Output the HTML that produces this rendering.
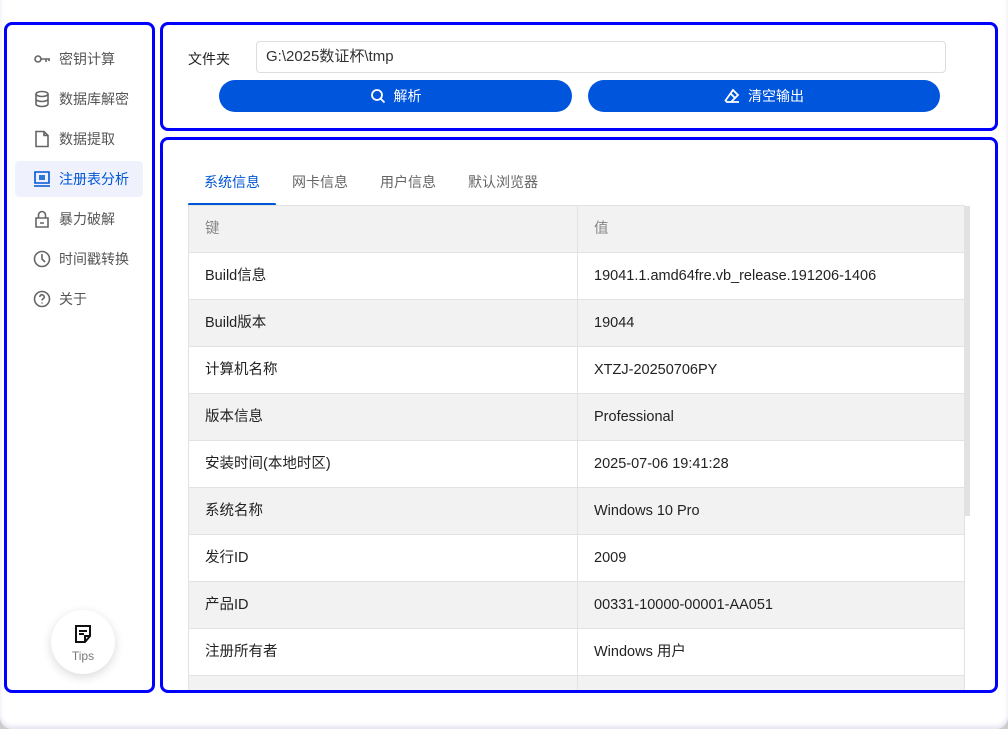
<!DOCTYPE html>
<html><head><meta charset="utf-8"><style>
*{box-sizing:border-box;margin:0;padding:0}
html,body{width:1008px;height:729px;overflow:hidden;background:#ccc}
body{font-family:"Liberation Sans","Noto Sans CJK SC",sans-serif;font-size:14px;color:#222}
.win{position:absolute;left:0;top:0;width:1008px;height:729px;background:#fff;border-radius:0 0 12px 12px;box-shadow:inset 0 -3px 4px #e4e4f2}
.panel{position:absolute;border:3px solid #0000ff;border-radius:8px;background:#fff}
.side{left:4px;top:22px;width:151px;height:671px}
.item{position:absolute;left:8px;width:128px;height:36px;display:flex;align-items:center;padding-left:18px;color:#555;font-size:14px}
.item svg{width:18px;height:18px;margin-right:8px;fill:none;stroke:#666;stroke-width:1.6}
.item.act{background:#eff2fd;color:#0055d4;border-radius:4px}
.item.act svg{stroke:#0055d4}
.tips{position:absolute;left:44px;top:585px;width:64px;height:64px;border-radius:50%;background:#fff;box-shadow:0 3px 10px rgba(0,0,0,.15);text-align:center;font-size:12px;color:#777}
.top{left:160px;top:22px;width:838px;height:109px}
.input{position:absolute;left:93px;top:16px;width:690px;height:32px;border:1px solid #ddd;border-radius:4px;padding-left:9px;line-height:30px;font-size:15px;color:#333}
.btn{position:absolute;top:55px;height:32px;border-radius:16px;background:#0055dd;color:#fff;display:flex;align-items:center;justify-content:center;font-size:14px}
.btn svg{width:16px;height:16px;margin-right:8px;fill:none;stroke:#fff;stroke-width:1.8}
.bot{left:160px;top:137px;width:838px;height:556px;overflow:hidden}
.tab{position:absolute;top:32px;font-size:14px;color:#666}
table{position:absolute;left:25px;top:65px;width:777px;border-collapse:collapse;font-size:14.5px;table-layout:fixed}
td{height:47px;border:1px solid #e2e2e2;padding:0 0 0 16px;color:#222;vertical-align:middle;line-height:20px}
td span{display:block;height:20px;line-height:20px}
tr:nth-child(odd) td{background:#f2f2f2}
tr:first-child td{color:#888}
</style></head><body><div class="win">
<div class="panel side">
 <div class="item" style="top:16px"><svg viewBox="0 0 18 18"><circle cx="5" cy="9" r="3"/><path d="M8 9h9M13 9v3M16 9v2"/></svg>密钥计算</div>
 <div class="item" style="top:56px"><svg viewBox="0 0 18 18"><ellipse cx="9" cy="4" rx="6" ry="2.5"/><path d="M3 4v10c0 1.4 2.7 2.5 6 2.5s6-1.1 6-2.5V4M3 9c0 1.4 2.7 2.5 6 2.5s6-1.1 6-2.5"/></svg>数据库解密</div>
 <div class="item" style="top:96px"><svg viewBox="0 0 18 18"><path d="M3 1.5h8l4 4v11H3z M11 1.5v4h4"/></svg>数据提取</div>
 <div class="item act" style="top:136px"><svg viewBox="0 0 18 18"><path d="M2 2h14v11H2z M1 16h16 M7 5v5M9 5v5M11 5v5"/></svg>注册表分析</div>
 <div class="item" style="top:176px"><svg viewBox="0 0 18 18"><path d="M3 8h12v9H3z M5.5 8V5a3.5 3.5 0 017 0v3 M7 13h4"/></svg>暴力破解</div>
 <div class="item" style="top:216px"><svg viewBox="0 0 18 18"><circle cx="9" cy="9" r="7.5"/><path d="M9 4v5l3 3"/></svg>时间戳转换</div>
 <div class="item" style="top:256px"><svg viewBox="0 0 18 18"><circle cx="9" cy="9" r="7.5"/><path d="M6.8 7a2.2 2.2 0 114 1.2c-.8.6-1.8 1-1.8 2.3M9 12.5v1"/></svg>关于</div>
 <div class="tips"><svg viewBox="0 0 20 20" width="20" height="20" style="margin-top:14px"><path d="M3 2h14v10l-5 6H3z M12 18v-6h5 M6 7h8M6 10h5" fill="none" stroke="#111" stroke-width="2"/></svg><div style="margin-top:2px">Tips</div></div>
</div>
<div class="panel top">
 <div style="position:absolute;left:25px;top:24px">文件夹</div>
 <div class="input">G:\2025数证杯\tmp</div>
 <div class="btn" style="left:56px;width:353px"><svg viewBox="0 0 16 16"><circle cx="7" cy="7" r="5"/><path d="M11 11l3.5 3.5"/></svg>解析</div>
 <div class="btn" style="left:425px;width:352px"><svg viewBox="0 0 16 16"><path d="M9 2l5 5-7 7H3l-1.5-1.5z M6 5l5 5 M7 14h8"/></svg>清空输出</div>
</div>
<div class="panel bot">
 <div class="tab" style="left:41px;color:#0055d4">系统信息</div>
 <div style="position:absolute;left:25px;top:63px;width:88px;height:3px;background:#0055d4;border-radius:2px"></div>
 <div class="tab" style="left:129px">网卡信息</div>
 <div class="tab" style="left:217px">用户信息</div>
 <div class="tab" style="left:305px">默认浏览器</div>
 <div style="position:absolute;left:801px;top:66px;width:6px;height:310px;background:#e2e2e2"></div>
 <table>
 <colgroup><col style="width:389px"><col></colgroup>
 <tr><td><span>键</span></td><td><span>值</span></td></tr>
 <tr><td><span>Build信息</span></td><td><span>19041.1.amd64fre.vb_release.191206-1406</span></td></tr>
 <tr><td><span>Build版本</span></td><td><span>19044</span></td></tr>
 <tr><td><span>计算机名称</span></td><td><span>XTZJ-20250706PY</span></td></tr>
 <tr><td><span>版本信息</span></td><td><span>Professional</span></td></tr>
 <tr><td><span>安装时间(本地时区)</span></td><td><span>2025-07-06 19:41:28</span></td></tr>
 <tr><td><span>系统名称</span></td><td><span>Windows 10 Pro</span></td></tr>
 <tr><td><span>发行ID</span></td><td><span>2009</span></td></tr>
 <tr><td><span>产品ID</span></td><td><span>00331-10000-00001-AA051</span></td></tr>
 <tr><td><span>注册所有者</span></td><td><span>Windows 用户</span></td></tr>
 <tr><td><span></span></td><td><span></span></td></tr>
 </table>
</div>
</div></body></html>
